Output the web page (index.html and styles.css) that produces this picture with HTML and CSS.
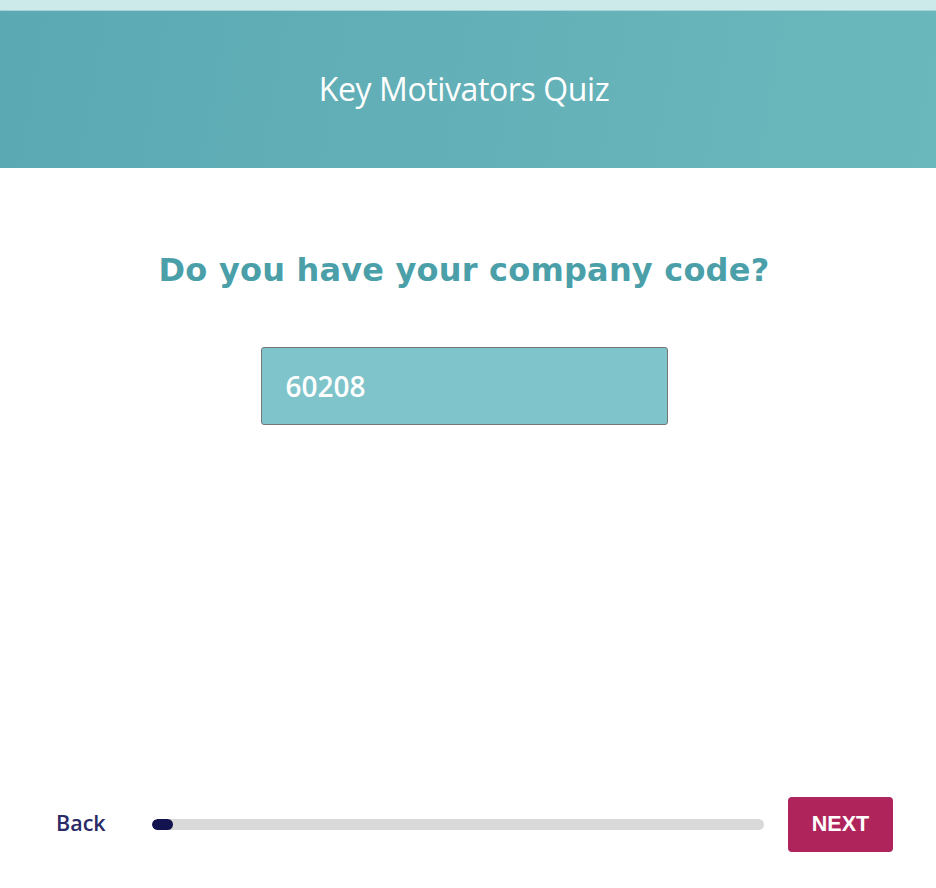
FILE: index.html
```html
<!DOCTYPE html>
<html lang="en">
<head>
<meta charset="utf-8">
<title>Key Motivators Quiz</title>
<link rel="stylesheet" href="styles.css">
</head>
<body>
<div class="page">
  <div class="strip"></div>
  <header class="header">
    <h1 class="title">Key Motivators Quiz</h1>
  </header>
  <main class="content">
    <h2 class="question">Do you have your company code?</h2>
    <div class="input-wrap">
      <input class="code-input" type="text" value="60208">
    </div>
  </main>
  <footer class="footer">
    <a class="back">Back</a>
    <div class="progress"><div class="progress-fill" style="width:21px"></div></div>
    <button class="next">NEXT</button>
  </footer>
</div>
</body>
</html>
```

FILE: styles.css
```css
html, body {
  margin: 0;
  padding: 0;
  background: #ffffff;
}
.page {
  width: 936px;
  height: 888px;
  display: flex;
  flex-direction: column;
}
.strip {
  height: 11px;
  background: #cdeaea;
  border-bottom: 1px solid #a9d3d6;
  box-sizing: border-box;
}
.header {
  height: 157px;
  background: linear-gradient(100deg, #5ba9b3 0%, #63b0b8 50%, #6bb8bc 100%);
  display: flex;
  align-items: center;
  justify-content: center;
  padding-right: 8px;
}
.title {
  margin: 0;
  font-family: "Open Sans", sans-serif;
  font-weight: 400;
  font-size: 32px;
  color: #ffffff;
  letter-spacing: -0.4px;
  padding-bottom: 2px;
}
.content {
  flex: 1;
  display: flex;
  flex-direction: column;
  align-items: center;
  padding-top: 80px;
  padding-right: 8px;
}
.question {
  margin: 0;
  font-family: "DejaVu Sans", sans-serif;
  font-weight: 700;
  font-size: 32px;
  color: #4a9fa9;
  line-height: 44px;
  letter-spacing: 0.2px;
}
.input-wrap {
  margin-top: 55px;
}
.code-input {
  width: 407px;
  height: 78px;
  box-sizing: border-box;
  background: #7fc4ca;
  border: 1px solid #767676;
  border-radius: 3px;
  padding: 0 24px;
  font-family: "Open Sans", sans-serif;
  font-weight: 600;
  font-size: 28px;
  color: #ffffff;
  outline: none;
}
.footer {
  height: 91px;
  display: flex;
  align-items: flex-start;
  padding: 0 43px 0 56px;
}
.back {
  font-family: "Open Sans", sans-serif;
  font-weight: 600;
  font-size: 21.5px;
  color: #2a2a66;
  margin-top: 11px;
  width: 96px;
}
.progress {
  margin-top: 22px;
  width: 612px;
  height: 11px;
  background: #d9d9d9;
  border-radius: 6px;
  overflow: hidden;
}
.progress-fill {
  height: 100%;
  background: #13134f;
  border-radius: 6px;
}
.next {
  margin-left: 24px;
  margin-top: 0;
  width: 105px;
  height: 55px;
  background: #b0245c;
  border: none;
  border-radius: 4px;
  color: #ffffff;
  font-family: "Liberation Sans", Arial, sans-serif;
  font-weight: 700;
  font-size: 21.5px;
  letter-spacing: 0;
}
```
